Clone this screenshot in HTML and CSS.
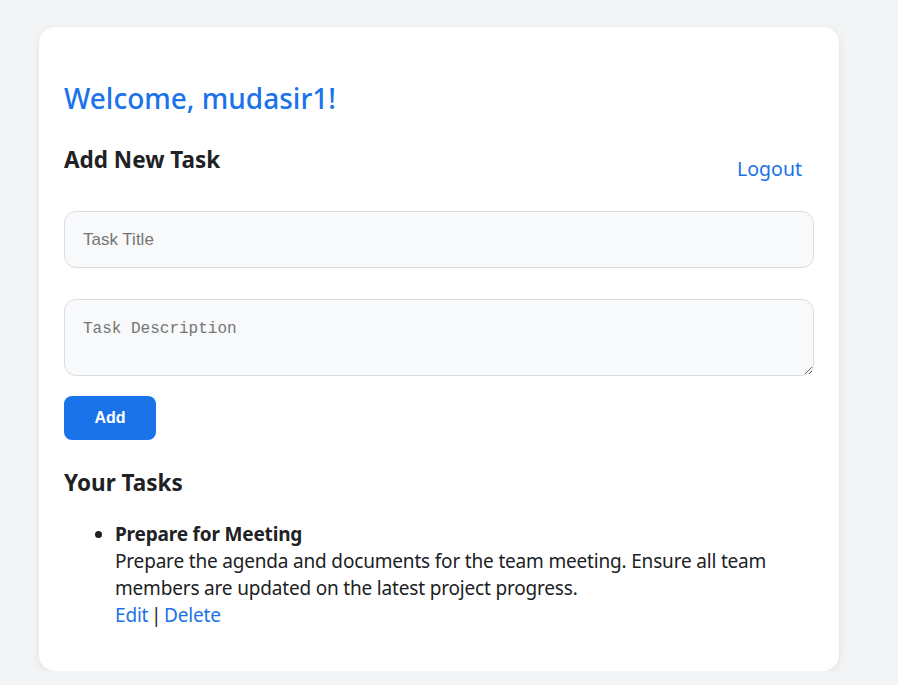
FILE: index.html
```html
<!DOCTYPE html>
<html lang="en">
<head>
<meta charset="utf-8">
<title>Tasks</title>
<link rel="stylesheet" href="styles.css">
</head>
<body>
<div class="card">
  <h1 class="welcome">Welcome, mudasir1!</h1>
  <div class="header-row">
    <h2 class="section-title">Add New Task</h2>
    <button class="logout">Logout</button>
  </div>
  <form class="task-form">
    <input class="field field-title" type="text" placeholder="Task Title">
    <textarea class="field field-desc" placeholder="Task Description"></textarea>
    <button class="add-btn" type="button">Add</button>
  </form>
  <h2 class="section-title tasks-title">Your Tasks</h2>
  <ul class="task-list">
    <li class="task">
      <strong class="task-name">Prepare for Meeting</strong><br>
      <span class="task-desc">Prepare the agenda and documents for the team meeting. Ensure all team members are updated on the latest project progress.</span><br>
      <span class="task-actions"><a class="task-link" href="#">Edit</a> | <a class="task-link" href="#">Delete</a></span>
    </li>
  </ul>
</div>
</body>
</html>
```

FILE: styles.css
```css
* { box-sizing: border-box; }
body {
  margin: 0;
  background: #f3f4f6;
  padding: 27px 0 0 39px;
  font-family: "Noto Sans", "Open Sans", sans-serif;
  color: #202124;
}
.card {
  width: 800px;
  background: #fff;
  border-radius: 16px;
  box-shadow: 0 2px 8px rgba(0,0,0,0.08);
  padding: 25px 25px 25px 25px;
}
.welcome {
  margin: 28px 0 0;
  font-size: 28px;
  line-height: 36px;
  font-weight: 500;
  color: #1a73e8;
}
.header-row {
  display: flex;
  justify-content: space-between;
  align-items: flex-start;
  margin-top: 28px;
  margin-bottom: 17px;
}
.section-title {
  margin: 0;
  font-size: 22.5px;
  line-height: 30px;
  font-weight: 700;
}
.header-row .section-title { margin-top: 1px; }
.logout {
  background: none;
  border: none;
  padding: 10px 12px;
  font-family: inherit;
  font-size: 19.5px;
  line-height: 30px;
  color: #1a73e8;
  cursor: pointer;
}
.task-form {
  display: flex;
  flex-direction: column;
  align-items: flex-start;
}
.field {
  width: 750px;
  background: #f8f9fa;
  border: 1px solid #dadce0;
  border-radius: 12px;
  padding: 0 18px;
  font-size: 16px;
  color: #202124;
}
.field::placeholder { color: #757575; }
.field-title {
  height: 57px;
  font-family: "Liberation Sans", Arial, sans-serif;
  font-size: 17px;
  margin-bottom: 31px;
}
.field-desc {
  height: 77px;
  padding-top: 20px;
  font-family: "Liberation Mono", monospace;
  margin: 0 0 20px;
  resize: vertical;
}
.add-btn {
  width: 92px;
  height: 44px;
  border: none;
  border-radius: 8px;
  background: #1a73e8;
  color: #fff;
  font-family: "Liberation Sans", Arial, sans-serif;
  font-weight: 700;
  font-size: 16px;
  cursor: pointer;
}
.tasks-title { margin-top: 28px; }
.task-list {
  margin: 23px 0 17px;
  padding-left: 51px;
  font-size: 19px;
  letter-spacing: -0.18px;
  line-height: 27px;
}
.task-name { font-weight: 700; }
.task-actions { word-spacing: -2px; }
.task-link {
  color: #1a73e8;
  text-decoration: none;
}
```
